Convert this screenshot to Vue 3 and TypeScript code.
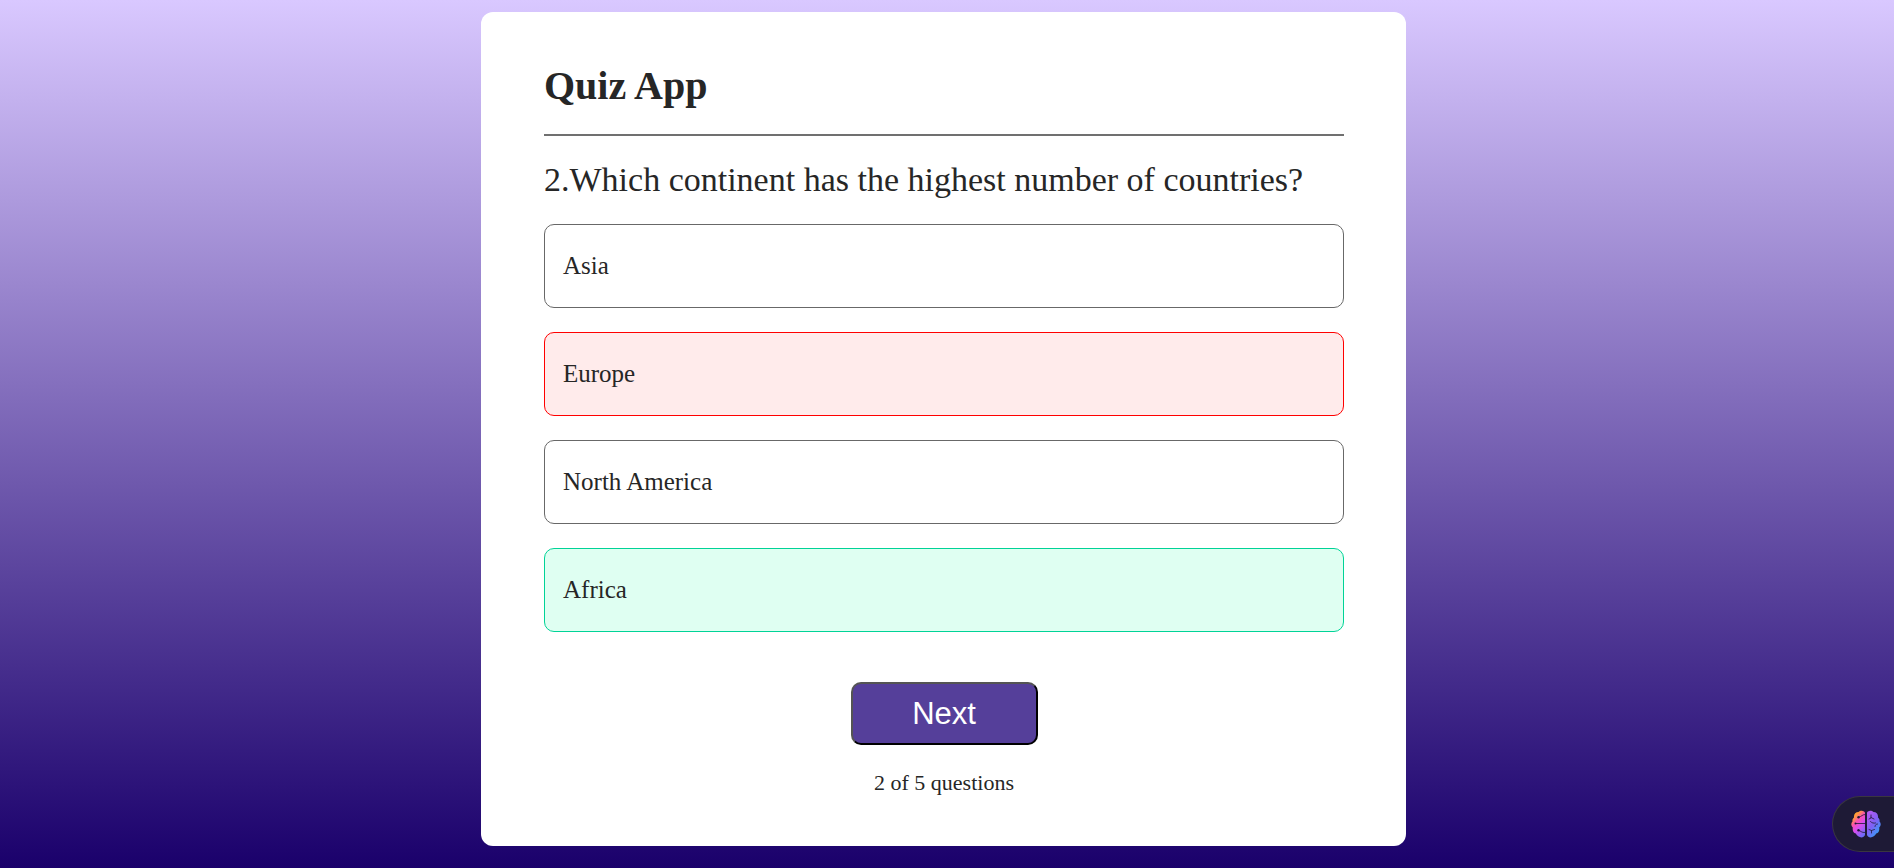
<script setup lang="ts">
import { ref } from 'vue'

type Status = 'plain' | 'wrong' | 'correct'

interface Option {
  label: string
  status: Status
}

const index = ref(1)
const total = 5
const question = 'Which continent has the highest number of countries?'
const options = ref<Option[]>([
  { label: 'Asia', status: 'plain' },
  { label: 'Europe', status: 'wrong' },
  { label: 'North America', status: 'plain' },
  { label: 'Africa', status: 'correct' },
])
</script>

<template>
  <div class="page">
    <main class="card">
      <h1 class="title">Quiz App</h1>
      <hr class="rule" />
      <h2 class="question">{{ index + 1 }}.{{ question }}</h2>
      <ul class="options">
        <li v-for="option in options" :key="option.label">
          <button type="button" class="option" :class="option.status">{{ option.label }}</button>
        </li>
      </ul>
      <button type="button" class="next">Next</button>
      <p class="progress">{{ index + 1 }} of {{ total }} questions</p>
    </main>

    <button type="button" class="assistant" aria-label="Open assistant">
      <svg class="brain" viewBox="0 0 30 28" aria-hidden="true">
        <defs>
          <linearGradient id="brain-left" x1="0.2" y1="0" x2="0.75" y2="1">
            <stop offset="0" stop-color="#ffb01f" />
            <stop offset="0.2" stop-color="#ff9a3c" />
            <stop offset="0.4" stop-color="#fb4fb4" />
            <stop offset="0.62" stop-color="#d94cf0" />
            <stop offset="1" stop-color="#6a6cf8" />
          </linearGradient>
          <linearGradient id="brain-right" x1="0.1" y1="0" x2="0.8" y2="1">
            <stop offset="0" stop-color="#b95af2" />
            <stop offset="0.5" stop-color="#8060f4" />
            <stop offset="1" stop-color="#28a8f8" />
          </linearGradient>
        </defs>
        <path
          fill="url(#brain-left)"
          d="M14 3C14 .5 9.500-.3 7.500 2 4.500 2 2.600 4.500 3 7.500 1.600 8.600 1.200 10.200 1.500 11.500-.2 13.300-.1 15.800 1.800 17.500 1.300 20.500 2.300 22.700 4.800 23.500 6.500 27.600 12.500 29 14 25z"
        />
        <path
          fill="url(#brain-right)"
          d="M16 3C16 .5 20.500-.3 22.500 2c3 0 4.900 2.500 4.500 5.500 1.400 1.100 1.800 2.700 1.500 4 1.700 1.800 1.600 4.300-.3 6 .5 3-.5 5.200-3 6C23.500 27.600 17.500 29 16 25z"
        />
        <g fill="none" stroke="#1e1a36" stroke-width="0.8" stroke-linecap="round">
          <path d="M14 4.500c-3 0-3 2-6 2.500M5 13.500h9M8 20.500c1.500 0 2.500 2.500 6 2" />
          <path d="M20 5v3l-2 1M20 7.500l3 1.500M19.500 11.500c1 1.500 3.500 2 5 1.500M24 16.500c.2-1.500 1-2.500 2.500-2.500M18 19.500l2.500 1v2.500M20.500 20.500l3-1" />
        </g>
        <g fill="#1e1a36">
          <circle cx="7.500" cy="7.200" r="1.200" />
          <circle cx="4.500" cy="13.500" r="1" />
          <circle cx="7.500" cy="20.200" r="1.200" />
        </g>
      </svg>
    </button>
  </div>
</template>

<style>
body {
  margin: 0;
}
</style>

<style scoped>
.page {
  box-sizing: border-box;
  min-height: 100vh;
  padding: 12px 15px 22px 8px;
  background: linear-gradient(#d9c8ff, #1a006b);
  font-family: 'Liberation Serif', 'Times New Roman', serif;
  color: #262626;
}

.card {
  box-sizing: border-box;
  display: flex;
  flex-direction: column;
  max-width: 925px;
  margin: 0 auto;
  padding: 50px 62px 50px 63px;
  border-radius: 12px;
  background: #fff;
}

.title {
  margin: 0;
  font-size: 40px;
  line-height: 47px;
}

.rule {
  width: 100%;
  height: 2px;
  margin: 25px 0;
  border: none;
  background: #707070;
}

.question {
  margin: 0 0 25px;
  font-size: 34px;
  font-weight: 400;
  line-height: 38px;
}

.options {
  display: flex;
  flex-direction: column;
  gap: 24px;
  margin: 0;
  padding: 0;
  list-style: none;
}

.option {
  box-sizing: border-box;
  display: block;
  width: 100%;
  height: 84px;
  padding: 0 18px;
  border: 1px solid #686868;
  border-radius: 10px;
  background: #fff;
  color: inherit;
  font: inherit;
  font-size: 25px;
  text-align: left;
  cursor: pointer;
}

.option.wrong {
  border-color: #ff0000;
  background: #ffebeb;
}

.option.correct {
  border-color: #00d397;
  background: #dffff2;
}

.next {
  box-sizing: border-box;
  width: 187px;
  height: 63px;
  margin: 50px auto 25px;
  padding: 0;
  border: 2px outset #000;
  border-radius: 10px;
  background: #553f9a;
  color: #fff;
  font-family: 'Liberation Sans', Arial, sans-serif;
  font-size: 31px;
  cursor: pointer;
}

.progress {
  margin: 0;
  font-size: 22px;
  line-height: 26px;
  text-align: center;
}

.assistant {
  position: fixed;
  right: 0;
  bottom: 16px;
  box-sizing: border-box;
  display: flex;
  align-items: center;
  width: 62px;
  height: 56px;
  padding: 0 0 0 18px;
  border: 1px solid #3a3640;
  border-right: none;
  border-radius: 28px 0 0 28px;
  background: #1e1a36;
  cursor: pointer;
}

.brain {
  width: 30px;
  height: 28px;
}
</style>
